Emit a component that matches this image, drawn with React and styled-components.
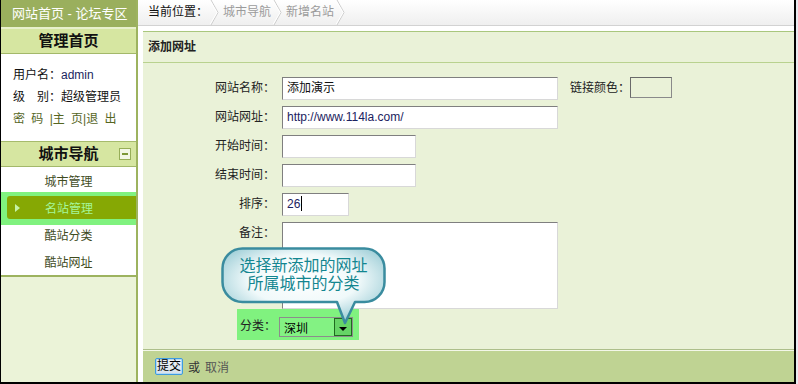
import React from "react";
import styled, { createGlobalStyle, css } from "styled-components";

const GlobalStyle = createGlobalStyle`
  html, body { margin: 0; padding: 0; background: #e8e9f0; }
  body {
    font-family: "Liberation Sans", "Noto Sans CJK SC", sans-serif;
    font-size: 12px;
    color: #000;
  }
  * { box-sizing: border-box; }
`;

const Frame = styled.div`
  display: flex;
  width: 796px;
  height: 384px;
  border-left: 1px solid #000;
  border-right: 2px solid #000;
  border-bottom: 2px solid #000;
  background: #fff;
`;

/* ---------- sidebar ---------- */
const Sidebar = styled.aside`
  width: 137px;
  flex: none;
  display: flex;
  flex-direction: column;
  border-right: 2px solid #9db35f;
  background: #fff;
`;

const SideTitle = styled.div`
  height: 29px;
  padding-left: 11px;
  line-height: 27px;
  font-size: 13px;
  color: #fff;
  background: #9aaf5d;
  border-bottom: 2px solid #e8f0cc;
  white-space: nowrap;
`;

const SectionBar = styled.div`
  height: 25px;
  display: grid;
  grid-template-columns: 1fr auto 1fr;
  align-items: center;
  background: #d6e6a1;
  border-bottom: 1px solid #a3b86a;
  font-size: 15px;
  font-weight: bold;
  color: #111;
`;

const BarTitle = styled.span`
  grid-column: 2;
  line-height: 24px;
`;

const MinusBox = styled.span`
  grid-column: 3;
  justify-self: end;
  margin-right: 5px;
  width: 12px;
  height: 12px;
  display: grid;
  place-items: center;
  background: #f3f7e6;
  border: 1px solid #97ae58;
  &::after {
    content: "";
    width: 6px;
    height: 2px;
    background: #7d9838;
  }
`;

const UserInfo = styled.div`
  height: 88px;
  padding: 10px 0 0 12px;
  line-height: 22px;
  font-size: 12px;
  color: #111;
  border-bottom: 1px solid #a6bb6c;
`;

const Admin = styled.span`
  color: #1c1f5e;
`;

const UserLinks = styled.div`
  color: #56661f;
  word-spacing: 3px;
`;

const MenuList = styled.nav`
  display: flex;
  flex-direction: column;
`;

const MenuItem = styled.div`
  height: 27px;
  display: flex;
  align-items: center;
  justify-content: center;
  font-size: 12px;
  color: #414c1e;
  ${(p) =>
    p.$active &&
    css`
      position: relative;
      z-index: 1;
      justify-content: stretch;
      padding-left: 6px;
      background: #80f27f;
      box-shadow: 0 -2px 0 #80f27f, 0 4px 0 #80f27f;
    `}
`;

const ActivePill = styled.span`
  flex: 1;
  height: 23px;
  display: grid;
  grid-template-columns: 6px 1fr 19px;
  align-items: center;
  padding-left: 8px;
  border-radius: 3px 0 0 3px;
  background: #86a804;
  color: #a4f79a;
`;

const Arrow = styled.span`
  width: 0;
  height: 0;
  border-top: 4px solid transparent;
  border-bottom: 4px solid transparent;
  border-left: 5px solid #c6f3a6;
`;

const PillText = styled.span`
  text-align: center;
`;

const SideFill = styled.div`
  flex: 1;
  background: #ebf3d8;
  border-top: 2px solid #9db35f;
`;

/* ---------- main ---------- */
const Main = styled.main`
  flex: 1;
  min-width: 0;
  display: flex;
  flex-direction: column;
`;

const Breadcrumb = styled.nav`
  height: 26px;
  flex: none;
  display: flex;
  align-items: center;
  padding-left: 10px;
  background: linear-gradient(#ffffff, #efefef);
  border-bottom: 1px solid #d2d2d2;
  font-size: 12px;
`;

const Crumb = styled.span`
  color: ${(p) => (p.$muted ? "#9b9b9b" : "#111")};
  line-height: 25px;
`;

const SepSvg = styled.svg`
  flex: none;
  margin: 0 4px 0 2px;
`;

const Sep = () => (
  <SepSvg width="9" height="25" viewBox="0 0 9 25">
    <polyline points="1,0 8,12.5 1,25" fill="none" stroke="#cdcdcd" strokeWidth="1" />
    <polyline points="0,0.5 7,12.5 0,24.5" fill="none" stroke="#ffffff" strokeWidth="1" />
  </SepSvg>
);

const Body = styled.div`
  flex: 1;
  min-height: 0;
  display: flex;
  flex-direction: column;
  padding: 5px 0 0 5px;
  background: #fff;
`;

const Panel = styled.section`
  flex: 1;
  position: relative;
  display: flex;
  flex-direction: column;
  background: #eaf2d8;
  border-top: 1px solid #a9c77d;
`;

const PanelHead = styled.h2`
  margin: 0;
  height: 31px;
  padding-left: 5px;
  line-height: 30px;
  font-size: 12px;
  font-weight: bold;
  color: #222;
  border-bottom: 1px solid #b9d28f;
`;

const Form = styled.div`
  display: grid;
  grid-template-columns: 132px auto;
  column-gap: 7px;
  row-gap: 6px;
  padding-top: 14px;
  align-items: start;
  justify-content: start;
`;

const Label = styled.span`
  text-align: right;
  line-height: 23px;
  font-size: 12px;
  color: #222;
  white-space: nowrap;
`;

const FieldRow = styled.div`
  display: flex;
  align-items: center;
`;

const Field = styled.div`
  width: ${(p) => p.$w}px;
  height: ${(p) => p.$h || 23}px;
  padding-left: 4px;
  line-height: 21px;
  font-size: 12px;
  color: ${(p) => (p.$link ? "#1b2260" : "#111")};
  background: #fff;
  border: 1px solid;
  border-color: #7f7f7f #d8d8d8 #d8d8d8 #7f7f7f;
  white-space: nowrap;
  overflow: hidden;
`;

const ColorLabel = styled.span`
  margin-left: 12px;
  font-size: 12px;
  color: #222;
  line-height: 21px;
`;

const ColorBox = styled.div`
  width: 42px;
  height: 21px;
  margin-top: -2px;
  border: 1px solid;
  border-color: #6a6a6a #8a8a8a #8a8a8a #6a6a6a;
  background: transparent;
`;

const Caret = styled.span`
  display: inline-block;
  width: 1px;
  height: 15px;
  margin-left: 1px;
  vertical-align: -3px;
  background: #000;
`;

const HighlightRow = styled.div`
  grid-column: 1 / -1;
  margin: -6px 0 0 94px;
  width: 122px;
  height: 31px;
  display: flex;
  align-items: center;
  padding-left: 3px;
  background: #80f27f;
`;

const HiLabel = styled.span`
  width: 39px;
  font-size: 12px;
  color: #222;
`;

const Select = styled.div`
  width: 74px;
  height: 20px;
  margin-top: 5px;
  display: flex;
  align-items: center;
  justify-content: space-between;
  padding-left: 4px;
  background: #83f283;
  border: 1px solid #8c8c8c;
  font-size: 12px;
  color: #000;
`;

const DropBtn = styled.span`
  width: 18px;
  height: 18px;
  display: grid;
  place-items: center;
  padding-top: 3px;
  background: #66d466;
  border: 1px solid #1f6a1f;
  &::after {
    content: "";
    width: 0;
    height: 0;
    border-left: 4px solid transparent;
    border-right: 4px solid transparent;
    border-top: 4px solid #000;
  }
`;

const Callout = styled.div`
  position: absolute;
  left: 78px;
  top: 215px;
  width: 168px;
  height: 80px;
`;

const CalloutText = styled.div`
  position: absolute;
  left: 0;
  top: 0;
  width: 165px;
  height: 56px;
  display: flex;
  flex-direction: column;
  align-items: center;
  justify-content: center;
  font-family: "Liberation Sans", "Noto Sans CJK SC", sans-serif;
  font-size: 16px;
  color: #138690;
`;

const CalloutLine = styled.div`
  height: 18px;
  line-height: 18px;
  white-space: nowrap;
`;

const Footer = styled.footer`
  height: 33px;
  flex: none;
  display: flex;
  align-items: center;
  gap: 5px;
  padding-left: 12px;
  background: #bfd393;
  border-top: 1px solid #adbf8a;
  box-shadow: inset 0 1px 0 #f3f7e9;
  font-size: 12px;
`;

const SubmitBtn = styled.button`
  height: 17px;
  padding: 0 1px;
  font-family: inherit;
  font-size: 12px;
  line-height: 13px;
  color: #000;
  background: linear-gradient(#f2f5f9, #d6e0ea);
  border: 1px solid #3d9be0;
  border-radius: 2px;
  box-shadow: inset 0 0 0 1px #b2d8f4;
`;

const Or = styled.span`
  color: #333;
`;

const Cancel = styled.span`
  color: #555;
`;

export default function App() {
  return (
    <>
      <GlobalStyle />
      <Frame>
        <Sidebar>
          <SideTitle>网站首页 - 论坛专区</SideTitle>
          <SectionBar>
            <BarTitle>管理首页</BarTitle>
          </SectionBar>
          <UserInfo>
            <div>
              用户名：<Admin>admin</Admin>
            </div>
            <div>级　别：超级管理员</div>
            <UserLinks>密 码 |主 页|退 出</UserLinks>
          </UserInfo>
          <SectionBar>
            <BarTitle>城市导航</BarTitle>
            <MinusBox />
          </SectionBar>
          <MenuList>
            <MenuItem>城市管理</MenuItem>
            <MenuItem $active>
              <ActivePill>
                <Arrow />
                <PillText>名站管理</PillText>
              </ActivePill>
            </MenuItem>
            <MenuItem>酷站分类</MenuItem>
            <MenuItem>酷站网址</MenuItem>
          </MenuList>
          <SideFill />
        </Sidebar>

        <Main>
          <Breadcrumb>
            <Crumb>当前位置：</Crumb>
            <Sep />
            <Crumb $muted>城市导航</Crumb>
            <Sep />
            <Crumb $muted>新增名站</Crumb>
            <Sep />
          </Breadcrumb>
          <Body>
            <Panel>
              <PanelHead>添加网址</PanelHead>
              <Form>
                <Label>网站名称：</Label>
                <FieldRow>
                  <Field $w={276}>添加演示</Field>
                  <ColorLabel>链接颜色：</ColorLabel>
                  <ColorBox />
                </FieldRow>
                <Label>网站网址：</Label>
                <Field $w={276} $link>
                  http://www.114la.com/
                </Field>
                <Label>开始时间：</Label>
                <Field $w={134} />
                <Label>结束时间：</Label>
                <Field $w={134} />
                <Label>排序：</Label>
                <Field $w={67} $link>
                  26
                  <Caret />
                </Field>
                <Label>备注：</Label>
                <Field $w={276} $h={87} />
                <HighlightRow>
                  <HiLabel>分类：</HiLabel>
                  <Select>
                    深圳
                    <DropBtn />
                  </Select>
                </HighlightRow>
              </Form>
              <Callout>
                <svg width="168" height="80" viewBox="0 0 168 80">
                  <defs>
                    <radialGradient id="bubbleFill" cx="50%" cy="42%" r="62%">
                      <stop offset="0" stopColor="#ffffff" />
                      <stop offset="0.55" stopColor="#f0f9fa" />
                      <stop offset="1" stopColor="#95c9d3" />
                    </radialGradient>
                  </defs>
                  <path
                    d="M 21.5 1.5 H 143.5 A 20 20 0 0 1 163.5 21.5 V 35 A 20 20 0 0 1 143.5 55 H 134 L 124 76 L 116 55 H 21.5 A 20 20 0 0 1 1.5 35 V 21.5 A 20 20 0 0 1 21.5 1.5 Z"
                    fill="url(#bubbleFill)"
                    stroke="#3a8c9f"
                    strokeWidth="2.5"
                    strokeLinejoin="round"
                  />
                </svg>
                <CalloutText>
                  <CalloutLine>选择新添加的网址</CalloutLine>
                  <CalloutLine>所属城市的分类</CalloutLine>
                </CalloutText>
              </Callout>
            </Panel>
            <Footer>
              <SubmitBtn type="button">提交</SubmitBtn>
              <Or>或</Or>
              <Cancel>取消</Cancel>
            </Footer>
          </Body>
        </Main>
      </Frame>
    </>
  );
}
